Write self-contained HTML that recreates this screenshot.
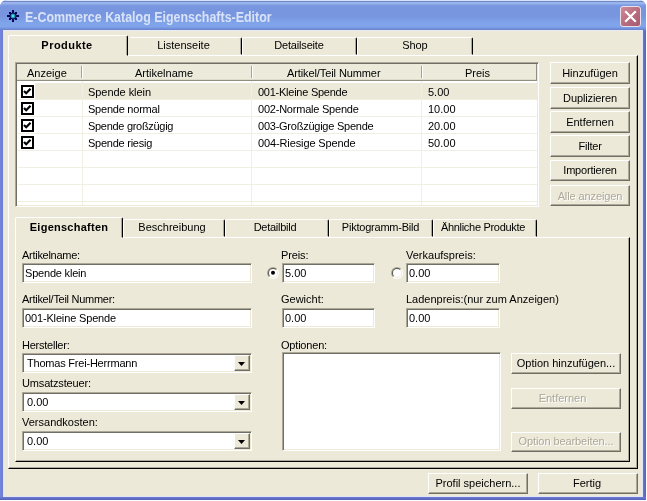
<!DOCTYPE html>
<html><head><meta charset="utf-8">
<style>
html,body{margin:0;padding:0;background:#fff;}
body{width:647px;height:501px;overflow:hidden;position:relative;font:11px "Liberation Sans",sans-serif;color:#000;}
.abs,.abs *{position:absolute;box-sizing:border-box;}
.t{white-space:nowrap;line-height:13px;height:13px;}
#win{will-change:transform;left:0;top:0;width:646px;height:500px;background:linear-gradient(to right,#7386dc 0,#6b7cd4 3px,#6878d0 643px,#5563bd 646px);border-radius:7px 7px 0 0;overflow:hidden;}
#title{left:0;top:0;width:646px;height:31px;background:linear-gradient(to bottom,#d6e2fb 0px,#d6e2fb 1px,#7389c4 1px,#7389c4 2px,#98b1eb 2px,#99b5ed 4px,#88a6e6 4px,#88a6e6 5px,#7c9ae2 5px,#7c9ae2 6px,#7996e0 6px,#7895df 8px,#7895df 16px,#7c9ee7 20px,#7fa4ea 23px,#7fa4ea 27px,#7b9be5 27px,#7b9be5 28px,#7390de 28px,#7390de 29px,#6d85cc 29px,#6d85cc 30px,#e9ecf5 30px);}
#ttext{left:25px;top:9px;font:bold 14px "Liberation Sans",sans-serif;color:#d8e3f8;line-height:17px;height:17px;white-space:nowrap;transform-origin:0 0;transform:scaleX(0.888);}
#client{left:3px;top:31px;width:640px;height:466px;background:#ece9d8;border:1px solid #e3e5f7;border-top:none;}
#bot{left:0;top:497px;width:646px;height:3px;background:linear-gradient(to bottom,#6c7cd2,#5262ba);}
.btn{background:#ece9d8;border:1px solid;border-color:#fff #716f64 #716f64 #fff;box-shadow:inset -1px -1px 0 #aca899;text-align:center;line-height:20px;white-space:nowrap;}
.btn.dis{color:#aca899;text-shadow:1px 1px 0 #fff;}
.sunk{background:#fff;border:1px solid;border-color:#aca899 #fff #fff #aca899;box-shadow:inset 1px 1px 0 #716f64,inset -1px -1px 0 #ece9d8;}
.panel{border:1px solid;border-color:#fff #000 #000 #fff;box-shadow:inset -1px -1px 0 #aca899;}
.tab{border:1px solid;border-color:#fff #000 transparent #fff;box-shadow:inset -1px 0 0 #aca899;border-radius:2px 2px 0 0;text-align:center;white-space:nowrap;background:#ece9d8;}
.tab.sel{font-weight:bold;}

.row.sel{left:17px;width:502px;height:16px;background:#ece9d8;}
.hl{left:0;width:519px;height:1px;background:#f1efe2;}
.vl{top:17px;width:1px;height:130px;background:#f1efe2;}
.hdbg{left:-1px;top:0;width:520px;height:17px;background:#ebeadb;border-bottom:1px solid #918f82;box-shadow:inset 0 -1px 0 #dedbcb;}
.sep{top:2px;width:2px;height:12px;border-left:1px solid #a5a394;border-right:1px solid #fff;}
.cb{left:3px;width:13px;height:13px;border:2px solid #000;background:#fff;}
.ck{left:5px;width:9px;height:7px;} .ck path{stroke:#000;stroke-width:2.2;fill:none;}
.arr{width:7px;height:4px;} .arr path{fill:#000;}
.radio{width:12px;height:12px;border-radius:50%;background:#fff;border:1px solid;border-color:#716f64 #fff #fff #716f64;box-shadow:0 0 0 1px #aca89980;}
.dot{width:4px;height:4px;border-radius:50%;background:#000;}
</style></head><body>
<div class="abs" id="win">
 <div id="title"></div>
 <svg style="left:7px;top:10px" width="12" height="12" viewBox="0 0 12 12">
  <g fill="#050558"><rect x="5" y="0" width="2" height="12"/><rect x="0" y="5" width="12" height="2"/>
  <rect x="2" y="2" width="2" height="2"/><rect x="8" y="2" width="2" height="2"/><rect x="2" y="8" width="2" height="2"/><rect x="8" y="8" width="2" height="2"/>
  <circle cx="6" cy="6" r="3.5"/></g><circle cx="6" cy="6" r="2.5" fill="#1684a6"/><circle cx="6" cy="6" r="1.4" fill="#4fe0dc"/>
 </svg>
 <div id="ttext">E-Commerce Katalog Eigenschafts-Editor</div>
 <!-- close button -->
 <div style="left:620px;top:6px;width:21px;height:21px;border:1px solid #e8e0ea;border-radius:3px;background:linear-gradient(135deg,#d08a96,#b5697c 60%,#a65a70);"></div>
 <svg style="left:620px;top:6px" width="21" height="21" viewBox="0 0 21 21"><path d="M6 6 L15 15 M15 6 L6 15" stroke="#fff" stroke-width="2.2" stroke-linecap="square"/></svg>
 <div id="client"></div><div id="bot"></div><div style="left:0;top:30px;width:3px;height:1px;background:#6f81d8"></div><div style="left:643px;top:30px;width:3px;height:1px;background:#6575cc"></div><div style="left:3px;top:30px;width:1px;height:1px;background:#e3e5f7"></div><div style="left:642px;top:30px;width:1px;height:1px;background:#e3e5f7"></div>

 <!-- outer tab control -->
 <div class="panel" style="left:8px;top:55px;width:630px;height:414px;"></div>
 <div class="tab" style="left:129px;top:37px;width:113px;border-left-color:transparent;height:18px;line-height:15px;padding-right:4px;">Listenseite</div>
 <div class="tab" style="left:242px;top:37px;width:115px;height:18px;line-height:15px;padding-right:1px;letter-spacing:-0.18px">Detailseite</div>
 <div class="tab" style="left:357px;top:37px;width:116px;height:18px;line-height:15px;padding-right:0px;letter-spacing:-0.1px">Shop</div>
 <div class="tab sel" style="left:8px;top:35px;width:120px;height:21px;line-height:18px;letter-spacing:0.45px;text-indent:-2px;">Produkte</div>

 <!-- list view -->
 <div class="sunk" id="lv" style="left:15px;top:62px;width:524px;height:145px;"></div>
 <div id="lvin" style="left:17px;top:64px;width:520px;height:141px;overflow:hidden;background:#fff;"><div style="left:1px;top:0;width:519px;height:141px;">
  <div class="row sel" style="top:19px"></div>
  <div class="hl" style="top:35px"></div><div class="hl" style="top:52px"></div><div class="hl" style="top:69px"></div><div class="hl" style="top:86px"></div><div class="hl" style="top:103px"></div><div class="hl" style="top:120px"></div><div class="hl" style="top:137px"></div>
  <div class="vl" style="left:64px"></div><div class="vl" style="left:233px"></div><div class="vl" style="left:403px"></div><div class="vl" style="left:520px"></div>
  <div class="hdbg"></div>
  <div class="sep" style="left:63px"></div><div class="sep" style="left:233px"></div><div class="sep" style="left:403px"></div><div style="left:518px;top:0;width:1px;height:17px;background:#918f82"></div><div style="left:519px;top:0;width:1px;height:18px;background:#ece9d8"></div>
  <div class="t" style="left:9px;top:3px">Anzeige</div>
  <div class="t" style="left:117px;top:3px">Artikelname</div>
  <div class="t" style="left:269px;top:3px;letter-spacing:-0.1px">Artikel/Teil Nummer</div>
  <div class="t" style="left:447px;top:3px">Preis</div>
  <div class="cb" style="top:21px"></div><div class="cb" style="top:38px"></div><div class="cb" style="top:55px"></div><div class="cb" style="top:72px"></div>
  <svg class="ck" style="top:24px"><path d="M1 3 L3.2 5.2 L7.5 0.8"/></svg><svg class="ck" style="top:41px"><path d="M1 3 L3.2 5.2 L7.5 0.8"/></svg><svg class="ck" style="top:58px"><path d="M1 3 L3.2 5.2 L7.5 0.8"/></svg><svg class="ck" style="top:75px"><path d="M1 3 L3.2 5.2 L7.5 0.8"/></svg>
  <div class="t" style="left:70px;top:22px;letter-spacing:-0.05px">Spende klein</div><div class="t" style="left:240px;top:22px;letter-spacing:-0.25px">001-Kleine Spende</div><div class="t" style="left:410px;top:22px">5.00</div>
  <div class="t" style="left:70px;top:39px;letter-spacing:-0.23px">Spende normal</div><div class="t" style="left:240px;top:39px;letter-spacing:-0.22px">002-Normale Spende</div><div class="t" style="left:410px;top:39px">10.00</div>
  <div class="t" style="left:70px;top:56px;letter-spacing:-0.3px">Spende großzügig</div><div class="t" style="left:240px;top:56px;letter-spacing:-0.24px">003-Großzügige Spende</div><div class="t" style="left:410px;top:56px">20.00</div>
  <div class="t" style="left:70px;top:73px;letter-spacing:-0.25px">Spende riesig</div><div class="t" style="left:240px;top:73px;letter-spacing:-0.12px">004-Riesige Spende</div><div class="t" style="left:410px;top:73px">50.00</div>
 </div></div>

 <!-- right buttons -->
 <div class="btn" style="left:550px;top:62px;width:80px;height:22px;">Hinzufügen</div>
 <div class="btn" style="left:550px;top:87px;width:80px;height:22px;letter-spacing:-0.1px">Duplizieren</div>
 <div class="btn" style="left:550px;top:111px;width:80px;height:22px;">Entfernen</div>
 <div class="btn" style="left:550px;top:135px;width:80px;height:22px;letter-spacing:-0.2px">Filter</div>
 <div class="btn" style="left:550px;top:160px;width:80px;height:21px;line-height:18px;letter-spacing:-0.2px;">Importieren</div>
 <div class="btn dis" style="left:550px;top:185px;width:80px;height:21px;letter-spacing:-0.1px">Alle anzeigen</div>

 <!-- inner tab control -->
 <div class="panel" style="left:15px;top:237px;width:615px;height:225px;"></div>
 <div class="tab" style="left:123px;top:219px;width:102px;height:18px;line-height:15px;padding-right:4px;">Beschreibung</div>
 <div class="tab" style="left:225px;top:219px;width:104px;height:18px;line-height:15px;padding-right:4px;letter-spacing:-0.25px">Detailbild</div>
 <div class="tab" style="left:329px;top:219px;width:104px;height:18px;line-height:15px;padding-right:1px;letter-spacing:-0.22px;">Piktogramm-Bild</div>
 <div class="tab" style="left:433px;top:219px;width:104px;height:18px;line-height:15px;padding-right:4px;letter-spacing:-0.3px;">Ähnliche Produkte</div>
 <div class="tab sel" style="left:15px;top:217px;width:108px;height:21px;line-height:18px;letter-spacing:0.25px;">Eigenschaften</div>

 <div class="t" style="left:22px;top:249px;letter-spacing:-0.28px">Artikelname:</div>
 <div class="sunk" style="left:22px;top:263px;width:230px;height:20px;"></div><div class="t" style="left:25px;top:267px;letter-spacing:-0.2px">Spende klein</div>
 <div class="t" style="left:22px;top:293px;letter-spacing:-0.28px">Artikel/Teil Nummer:</div>
 <div class="sunk" style="left:22px;top:308px;width:230px;height:20px;"></div><div class="t" style="left:25px;top:312px;letter-spacing:-0.15px">001-Kleine Spende</div>
 <div class="t" style="left:22px;top:339px;letter-spacing:-0.24px">Hersteller:</div>
 <div class="sunk" style="left:22px;top:353px;width:230px;height:20px;"></div><div class="t" style="left:27px;top:357px;letter-spacing:-0.21px">Thomas Frei-Herrmann</div>
 <div class="btn" style="left:234px;top:355px;width:16px;height:16px;"></div><svg class="arr" style="left:238px;top:362px"><path d="M0 0 H7 L3.5 4 Z"/></svg>
 <div class="t" style="left:22px;top:377px;letter-spacing:-0.16px">Umsatzsteuer:</div>
 <div class="sunk" style="left:22px;top:392px;width:230px;height:20px;"></div><div class="t" style="left:27px;top:396px">0.00</div>
 <div class="btn" style="left:234px;top:394px;width:16px;height:16px;"></div><svg class="arr" style="left:238px;top:401px"><path d="M0 0 H7 L3.5 4 Z"/></svg>
 <div class="t" style="left:22px;top:416px">Versandkosten:</div>
 <div class="sunk" style="left:22px;top:431px;width:230px;height:20px;"></div><div class="t" style="left:27px;top:435px">0.00</div>
 <div class="btn" style="left:234px;top:433px;width:16px;height:16px;"></div><svg class="arr" style="left:238px;top:440px"><path d="M0 0 H7 L3.5 4 Z"/></svg>

 <div class="t" style="left:281px;top:249px;letter-spacing:-0.13px">Preis:</div>
 <svg style="left:267px;top:267px" width="12" height="12" viewBox="0 0 12 12"><defs><clipPath id="tl267"><path d="M0 0 H12 L0 12 Z"/></clipPath><clipPath id="br267"><path d="M12 0 V12 H0 Z"/></clipPath></defs><circle cx="6" cy="6" r="6" fill="#aca899" clip-path="url(#tl267)"/><circle cx="6" cy="6" r="6" fill="#fff" clip-path="url(#br267)"/><circle cx="6" cy="6" r="5" fill="#5a584e" clip-path="url(#tl267)"/><circle cx="6" cy="6" r="5" fill="#ece9d8" clip-path="url(#br267)"/><circle cx="6" cy="6" r="4" fill="#fff"/><circle cx="6" cy="5.8" r="2" fill="#000"/></svg>
 <div class="sunk" style="left:282px;top:263px;width:93px;height:20px;"></div><div class="t" style="left:285px;top:267px">5.00</div>
 <div class="t" style="left:406px;top:249px">Verkaufspreis:</div>
 <svg style="left:391px;top:267px" width="12" height="12" viewBox="0 0 12 12"><defs><clipPath id="tl391"><path d="M0 0 H12 L0 12 Z"/></clipPath><clipPath id="br391"><path d="M12 0 V12 H0 Z"/></clipPath></defs><circle cx="6" cy="6" r="6" fill="#aca899" clip-path="url(#tl391)"/><circle cx="6" cy="6" r="6" fill="#fff" clip-path="url(#br391)"/><circle cx="6" cy="6" r="5" fill="#5a584e" clip-path="url(#tl391)"/><circle cx="6" cy="6" r="5" fill="#ece9d8" clip-path="url(#br391)"/><circle cx="6" cy="6" r="4" fill="#fff"/></svg>
 <div class="sunk" style="left:406px;top:263px;width:94px;height:20px;"></div><div class="t" style="left:409px;top:267px">0.00</div>
 <div class="t" style="left:281px;top:293px">Gewicht:</div>
 <div class="sunk" style="left:282px;top:308px;width:93px;height:20px;"></div><div class="t" style="left:285px;top:312px">0.00</div>
 <div class="t" style="left:406px;top:293px">Ladenpreis:(nur zum Anzeigen)</div>
 <div class="sunk" style="left:406px;top:308px;width:94px;height:20px;"></div><div class="t" style="left:409px;top:312px">0.00</div>
 <div class="t" style="left:281px;top:339px;letter-spacing:-0.2px">Optionen:</div>
 <div class="sunk" style="left:282px;top:352px;width:219px;height:99px;"></div>

 <div class="btn" style="left:511px;top:353px;width:110px;height:21px;line-height:18px;">Option hinzufügen...</div>
 <div class="btn dis" style="left:511px;top:388px;width:110px;height:21px;line-height:18px;padding-right:7px;">Entfernen</div>
 <div class="btn dis" style="left:511px;top:432px;width:110px;height:20px;line-height:16px;letter-spacing:-0.08px">Option bearbeiten...</div>

 <div class="btn" style="left:428px;top:473px;width:100px;height:21px;line-height:18px;">Profil speichern...</div>
 <div class="btn" style="left:538px;top:473px;width:100px;height:21px;line-height:18px;padding-right:2px;">Fertig</div>
</div>
</body></html>
